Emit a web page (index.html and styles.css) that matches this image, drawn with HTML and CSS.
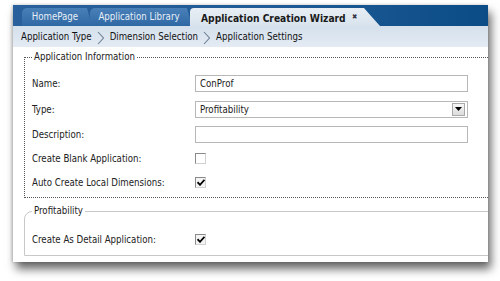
FILE: index.html
```html
<!DOCTYPE html>
<html lang="en">
<head>
    <meta charset="UTF-8">
    <title>Application Creation Wizard</title>
    <link rel="stylesheet" href="styles.css">
</head>
<body>

<div class="window">
    <!-- Tab strip -->
    <div class="tabbar">
        <div class="tab tab-home">HomePage</div>
        <div class="tab tab-library">Application Library</div>
        <div class="tab tab-active">Application Creation Wizard <span class="tab-close">&#x2716;</span></div>
    </div>

    <!-- Wizard steps -->
    <div class="crumbs">
        <span>Application Type</span>
        <svg class="chevron" width="8" height="14" viewBox="0 0 8 14"><path d="M1 1 L6.5 7 L1 13" fill="none" stroke="#6b7f95" stroke-width="1.1"/></svg>
        <span>Dimension Selection</span>
        <svg class="chevron" width="8" height="14" viewBox="0 0 8 14"><path d="M1 1 L6.5 7 L1 13" fill="none" stroke="#6b7f95" stroke-width="1.1"/></svg>
        <span>Application Settings</span>
    </div>

    <div class="content">
        <fieldset class="group group-info">
            <legend>Application Information</legend>
            <div class="form-grid info-grid">
                <label>Name:</label>
                <div class="field">ConProf</div>

                <label>Type:</label>
                <div class="field select">
                    <span>Profitability</span>
                    <span class="select-btn"><svg width="7" height="4" viewBox="0 0 7 4"><path d="M0 0 H7 L3.5 4 Z" fill="#000"/></svg></span>
                </div>

                <label>Description:</label>
                <div class="field"></div>

                <label>Create Blank Application:</label>
                <div><span class="check"></span></div>

                <label>Auto Create Local Dimensions:</label>
                <div><span class="check checked"><svg width="8" height="7" viewBox="0 0 8 7"><path d="M0.5 3.2 L3 5.8 L7.5 0.8" fill="none" stroke="#000" stroke-width="1.8"/></svg></span></div>
            </div>
        </fieldset>

        <fieldset class="group group-prof">
            <legend>Profitability</legend>
            <div class="form-grid prof-grid">
                <label>Create As Detail Application:</label>
                <div><span class="check checked"><svg width="8" height="7" viewBox="0 0 8 7"><path d="M0.5 3.2 L3 5.8 L7.5 0.8" fill="none" stroke="#000" stroke-width="1.8"/></svg></span></div>
            </div>
        </fieldset>
    </div>
</div>

</body>
</html>
```

FILE: styles.css
```css
/* Page */
html, body {
    height: 281px;
}

body {
    margin: 0;
    padding-top: 5px;
    box-sizing: border-box;
    background: #ffffff;
    font-family: "DejaVu Sans Condensed", "DejaVu Sans", sans-serif;
    font-size: 9.6px;
    color: #222;
}

.window {
    width: 475px;
    height: 257px;
    margin-left: 13px;
    background: #ffffff;
    box-shadow: 3px 7px 9px rgba(0, 0, 0, 0.6), -1px 0 3px rgba(0, 0, 0, 0.2);
    overflow: hidden;
}

/* Tab strip */
.tabbar {
    height: 21px;
    display: flex;
    align-items: flex-end;
    padding-left: 9px;
    background: linear-gradient(to right, #2a609b 0%, #1d5a95 60%, #0b4c86 100%);
}

.tab {
    height: 18px;
    line-height: 18px;
    margin-right: -2px;
    color: #e8eff7;
    text-align: center;
    background: linear-gradient(#4a80b8, #2e68a4);
    border-radius: 5px 0 0 0;
    clip-path: polygon(0 0, calc(100% - 5px) 0, 100% 100%, 0 100%);
    white-space: nowrap;
    box-sizing: border-box;
}

.tab-home {
    width: 70px;
    padding-right: 4px;
}

.tab-library {
    width: 102px;
    padding-right: 4px;
}

.tab-active {
    width: 190px;
    padding-left: 11px;
    text-align: left;
    color: #1a1a1a;
    font-size: 10.2px;
    font-weight: bold;
    background: linear-gradient(#e8eef4, #d8e3ed);
    border-radius: 4px 0 0 0;
    clip-path: polygon(0 0, calc(100% - 16px) 0, calc(100% - 9px) 45%, 100% 100%, 0 100%);
}

.tab-close {
    font-size: 7px;
    margin-left: 3px;
    vertical-align: 3px;
    color: #334;
}

/* Wizard steps */
.crumbs {
    height: 21px;
    display: flex;
    align-items: center;
    gap: 5px;
    padding-left: 8px;
    background: linear-gradient(#d4e0ec, #e4ebf3);
    color: #111;
}

.chevron {
    margin-top: 3px;
}

/* Content */
.content {
    padding: 3px 0 0 11px;
}

.group {
    margin: 0 -20px 0 0;
    padding: 0 0 0 7px;
    min-inline-size: 0;
}

.group legend {
    padding: 0 2px;
    line-height: 14px;
    color: #222;
}

.group-info {
    border: 1px dotted #555;
    padding-bottom: 2px;
}

.group-prof {
    margin-top: 6px;
    border: 1px solid #c8c8c8;
    border-radius: 8px 0 0 0;
    padding-bottom: 3px;
}

.form-grid {
    display: grid;
    grid-template-columns: 163px 273px;
    align-items: center;
}

.info-grid {
    padding-top: 7px;
    grid-template-rows: 25px 26px 25px 22px 26px;
}

.prof-grid {
    padding-top: 8px;
    grid-template-rows: 26px;
}

.form-grid label {
    white-space: nowrap;
}

/* Controls */
.field {
    height: 15px;
    line-height: 15px;
    padding: 0 4px;
    border: 1px solid #b7b7b7;
    background: #fff;
}

.select {
    display: flex;
    justify-content: space-between;
    align-items: center;
    padding-right: 2px;
}

.select-btn {
    width: 11px;
    height: 11px;
    display: flex;
    align-items: center;
    justify-content: center;
    background: linear-gradient(#f6f6f6, #dcdcdc);
    border: 1px solid #a9a9a9;
}

.check {
    display: flex;
    align-items: center;
    justify-content: center;
    width: 9px;
    height: 9px;
    border: 1px solid #8a8a8a;
    border-right-color: #d0d0d0;
    border-bottom-color: #d0d0d0;
    background: #fff;
}

.check.checked {
    background: #f4f4f4;
}
```
